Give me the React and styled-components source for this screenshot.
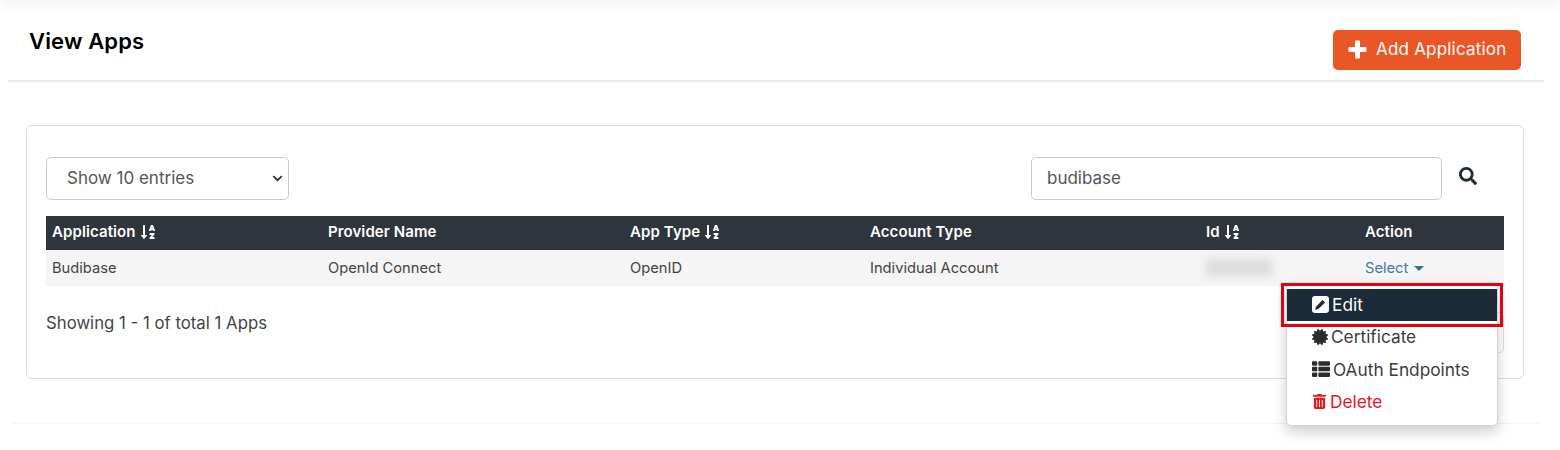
import React from "react";
import styled, { createGlobalStyle } from "styled-components";
import { FaSearch, FaCertificate, FaThList, FaTrashAlt, FaSortAlphaDown, FaChevronDown } from "react-icons/fa";

const Global = createGlobalStyle`
  html, body { margin: 0; background: #fff; }
  body { font-family: Inter, "Liberation Sans", sans-serif; color: #3a3a3a; }
  * { box-sizing: border-box; }
`;

const Page = styled.div`
  position: relative;
  width: 1560px;
  height: 450px;
  overflow: hidden;
  padding: 0 16px 0 8px;
`;
const TopShade = styled.div`
  height: 0;
  margin: 0 -16px 0 -8px;
  box-shadow: 0 0 14px 2px rgba(0, 0, 0, 0.13);
`;
const Header = styled.header`
  display: flex;
  justify-content: space-between;
  height: 82px;
  padding: 30px 23px 0 21px;
  border-bottom: 2px solid #e9e9e9;
`;
const Title = styled.h1`
  margin: -1px 0 0;
  font-size: 22px;
  line-height: 24px;
  font-weight: 600;
  letter-spacing: 0.15px;
  color: #000;
`;
const AddButton = styled.button`
  display: flex;
  align-items: center;
  gap: 9px;
  width: 188px;
  height: 40px;
  padding: 0 0 2px 15px;
  border: 0;
  border-radius: 5px;
  background: #ea5726;
  color: #fff;
  font: 400 17px Inter, sans-serif;
  letter-spacing: 0.2px;
`;
const PlusIcon = styled.svg`
  flex: none;
  width: 19px;
  height: 19px;
`;
const Card = styled.section`
  height: 254px;
  margin: 43px 20px 0 18px;
  padding: 31px 19px 0;
  border: 1px solid #dcdcdc;
  border-radius: 6px;
`;
const Controls = styled.div`
  display: flex;
  align-items: flex-start;
  height: 59px;
`;
const fieldStyles = `
  height: 43px;
  border: 1px solid #c9c9c9;
  border-radius: 5px;
  background: #fff;
  color: #555;
  font: 400 17px Inter, sans-serif;
`;
const SelectWrap = styled.div`
  position: relative;
  width: 243px;
  svg {
    position: absolute;
    right: 6px;
    top: 16px;
    font-size: 11px;
    color: #333;
    pointer-events: none;
  }
`;
const EntrySelect = styled.select`
  ${fieldStyles}
  width: 100%;
  padding: 0 0 1px 20px;
  appearance: none;
`;
const SearchInput = styled.input`
  ${fieldStyles}
  width: 411px;
  margin-left: auto;
  padding: 0 0 1px 15px;
`;
const SearchButton = styled.span`
  display: flex;
  width: 62px;
  padding: 10px 0 0 17px;
  color: #222b33;
  font-size: 18px;
`;
const Table = styled.table`
  width: 1458px;
  table-layout: fixed;
  border-collapse: collapse;
`;
const HeadCell = styled.th`
  height: 34px;
  padding: 0 0 3px 6px;
  background: #2e353d;
  color: #fff;
  text-align: left;
  font-weight: 600;
  font-size: 15px;
  letter-spacing: 0.1px;
  white-space: nowrap;
  svg { margin-left: 4px; font-size: 16px; vertical-align: -3px; }
`;
const BodyCell = styled.td`
  height: 36px;
  padding: 0 0 1px 6px;
  background: #f5f5f5;
  color: #444;
  font-size: 14.7px;
`;
const BlurredId = styled.span`
  display: block;
  width: 66px;
  height: 17px;
  background: #dcdcdc;
  filter: blur(4px);
`;
const SelectLink = styled.span`
  color: #4a78a8;
`;
const Caret = styled.i`
  display: inline-block;
  margin-left: 6px;
  border: 5px solid transparent;
  border-top-color: #2f6fa8;
  border-bottom: 0;
  vertical-align: 2px;
`;
const Footer = styled.div`
  display: flex;
  justify-content: space-between;
  align-items: flex-start;
  margin-top: 26px;
`;
const Info = styled.span`
  font-size: 16.75px;
  line-height: 22px;
  color: #444;
`;
const Pager = styled.div`
  width: 200px;
  height: 41px;
  border: 1px solid #dcdcdc;
  border-radius: 5px;
`;
const BottomRule = styled.div`
  height: 1px;
  margin: 44px 4px 0;
  background: #f2f2f2;
`;
const Menu = styled.ul`
  position: absolute;
  left: 1286px;
  top: 283px;
  width: 212px;
  height: 143px;
  margin: 0;
  padding: 5px 0 0;
  list-style: none;
  background: #fff;
  border: 1px solid #d4d4d4;
  border-radius: 5px;
  box-shadow: 0 6px 14px rgba(0, 0, 0, 0.2);
`;
const MenuItem = styled.li`
  display: flex;
  align-items: center;
  gap: 3px;
  height: 32.3px;
  padding: 0 0 1px 25px;
  font-size: 17.3px;
  color: ${(p) => (p.$danger ? "#e8161c" : p.$active ? "#fff" : "#3c3c3c")};
  background: ${(p) => (p.$active ? "#1b2a38" : "transparent")};
  svg { flex: none; color: ${(p) => (p.$danger ? "#e8161c" : "#2c2c2c")}; }
`;
const EditIcon = styled.svg`
  width: 17px;
  height: 17px;
`;
const Highlight = styled.div`
  position: absolute;
  left: 1281px;
  top: 283px;
  width: 222px;
  height: 44px;
  border: 3px solid #e8000d;
  pointer-events: none;
`;

const columns = [
  { label: "Application", width: 276, sort: true },
  { label: "Provider Name", width: 302 },
  { label: "App Type", width: 240, sort: true },
  { label: "Account Type", width: 336 },
  { label: "Id", width: 159, sort: true },
  { label: "Action", width: 145 },
];

export default function App() {
  return (
    <Page>
      <Global />
      <TopShade />
      <Header>
        <Title>View Apps</Title>
        <AddButton>
          <PlusIcon viewBox="0 0 19 19">
            <path
              d="M7 1.5a1 1 0 0 1 1-1h3a1 1 0 0 1 1 1V7h5.5a1 1 0 0 1 1 1v3a1 1 0 0 1-1 1H12v5.5a1 1 0 0 1-1 1H8a1 1 0 0 1-1-1V12H1.5a1 1 0 0 1-1-1V8a1 1 0 0 1 1-1H7z"
              fill="#fff"
            />
          </PlusIcon>
          Add Application
        </AddButton>
      </Header>
      <Card>
        <Controls>
          <SelectWrap>
            <EntrySelect defaultValue="10">
              <option value="10">Show 10 entries</option>
            </EntrySelect>
            <FaChevronDown />
          </SelectWrap>
          <SearchInput defaultValue="budibase" />
          <SearchButton>
            <FaSearch />
          </SearchButton>
        </Controls>
        <Table>
          <colgroup>
            {columns.map((c) => (
              <col key={c.label} width={c.width} />
            ))}
          </colgroup>
          <thead>
            <tr>
              {columns.map((c) => (
                <HeadCell key={c.label}>
                  {c.label}
                  {c.sort && <FaSortAlphaDown />}
                </HeadCell>
              ))}
            </tr>
          </thead>
          <tbody>
            <tr>
              <BodyCell>Budibase</BodyCell>
              <BodyCell>OpenId Connect</BodyCell>
              <BodyCell>OpenID</BodyCell>
              <BodyCell>Individual Account</BodyCell>
              <BodyCell>
                <BlurredId />
              </BodyCell>
              <BodyCell>
                <SelectLink>Select</SelectLink>
                <Caret />
              </BodyCell>
            </tr>
          </tbody>
        </Table>
        <Footer>
          <Info>Showing 1 - 1 of total 1 Apps</Info>
          <Pager />
        </Footer>
      </Card>
      <BottomRule />
      <Menu>
        <MenuItem $active>
          <EditIcon viewBox="0 0 16 16">
            <rect x="0" y="0" width="16" height="16" rx="3" fill="#fff" />
            <path d="M3 13l.7-3L10 3.7l2.3 2.3L6 12.3z" fill="#1b2a38" />
          </EditIcon>
          Edit
        </MenuItem>
        <MenuItem>
          <FaCertificate size={16} />
          Certificate
        </MenuItem>
        <MenuItem>
          <FaThList size={18} />
          OAuth Endpoints
        </MenuItem>
        <MenuItem $danger>
          <FaTrashAlt size={15} />
          Delete
        </MenuItem>
      </Menu>
      <Highlight />
    </Page>
  );
}
